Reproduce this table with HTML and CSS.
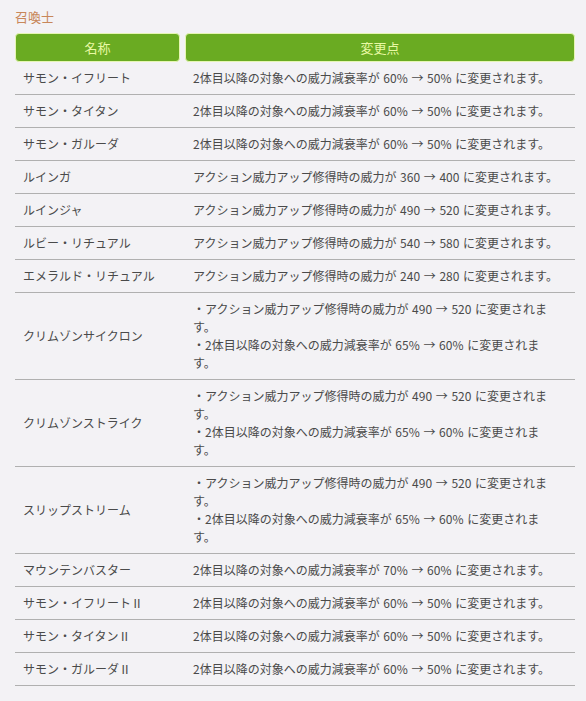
FILE: index.html
```html
<!DOCTYPE html>
<html lang="ja">
<head>
<meta charset="utf-8">
<link rel="stylesheet" href="styles.css">
</head>
<body>
<div class="page">
  <h3 class="title">召喚士</h3>
  <div class="table">
    <div class="head">
      <div class="hcell">名称</div>
      <div class="hcell">変更点</div>
    </div>
    <div class="row"><div class="name">サモン・イフリート</div><div class="desc">2体目以降の対象への威力減衰率が 60% → 50% に変更されます。</div></div>
    <div class="row"><div class="name">サモン・タイタン</div><div class="desc">2体目以降の対象への威力減衰率が 60% → 50% に変更されます。</div></div>
    <div class="row"><div class="name">サモン・ガルーダ</div><div class="desc">2体目以降の対象への威力減衰率が 60% → 50% に変更されます。</div></div>
    <div class="row"><div class="name">ルインガ</div><div class="desc">アクション威力アップ修得時の威力が 360 → 400 に変更されます。</div></div>
    <div class="row"><div class="name">ルインジャ</div><div class="desc">アクション威力アップ修得時の威力が 490 → 520 に変更されます。</div></div>
    <div class="row"><div class="name">ルビー・リチュアル</div><div class="desc">アクション威力アップ修得時の威力が 540 → 580 に変更されます。</div></div>
    <div class="row"><div class="name">エメラルド・リチュアル</div><div class="desc">アクション威力アップ修得時の威力が 240 → 280 に変更されます。</div></div>
    <div class="row"><div class="name">クリムゾンサイクロン</div><div class="desc">・アクション威力アップ修得時の威力が 490 → 520 に変更されます。<br>・2体目以降の対象への威力減衰率が 65% → 60% に変更されます。</div></div>
    <div class="row"><div class="name">クリムゾンストライク</div><div class="desc">・アクション威力アップ修得時の威力が 490 → 520 に変更されます。<br>・2体目以降の対象への威力減衰率が 65% → 60% に変更されます。</div></div>
    <div class="row"><div class="name">スリップストリーム</div><div class="desc">・アクション威力アップ修得時の威力が 490 → 520 に変更されます。<br>・2体目以降の対象への威力減衰率が 65% → 60% に変更されます。</div></div>
    <div class="row"><div class="name">マウンテンバスター</div><div class="desc">2体目以降の対象への威力減衰率が 70% → 60% に変更されます。</div></div>
    <div class="row"><div class="name">サモン・イフリートⅡ</div><div class="desc">2体目以降の対象への威力減衰率が 60% → 50% に変更されます。</div></div>
    <div class="row"><div class="name">サモン・タイタンⅡ</div><div class="desc">2体目以降の対象への威力減衰率が 60% → 50% に変更されます。</div></div>
    <div class="row"><div class="name">サモン・ガルーダⅡ</div><div class="desc">2体目以降の対象への威力減衰率が 60% → 50% に変更されます。</div></div>
  </div>
</div>
</body>
</html>
```
FILE: styles.css
```css
html, body {
  margin: 0;
  padding: 0;
  background: #f3f2f5;
}
body {
  font-family: "Noto Sans CJK JP", "Noto Sans", sans-serif;
  font-size: 12px;
  color: #4a4a4a;
}
.page {
  padding: 8px 12px 10px 15px;
}
.title {
  margin: 0 0 7px 0;
  font-size: 13px;
  font-weight: normal;
  color: #c8875a;
  line-height: 18px;
}
.table {
  width: 560px;
}
.head {
  display: grid;
  grid-template-columns: 165px 1fr;
  column-gap: 5px;
}
.hcell {
  background: #6aab22;
  border: 1px solid #e6f6b4;
  border-radius: 4px;
  color: #e9f9a4;
  text-align: center;
  font-size: 13px;
  line-height: 27px;
  height: 27px;
}
.row {
  display: grid;
  grid-template-columns: 170px 1fr;
  align-items: center;
  border-bottom: 1px solid #b0b0b0;
}
.name, .desc {
  padding: 7px 8px;
  line-height: 18px;
}
.desc {
  padding-right: 13.5px;
  word-spacing: 1px;
}
```
